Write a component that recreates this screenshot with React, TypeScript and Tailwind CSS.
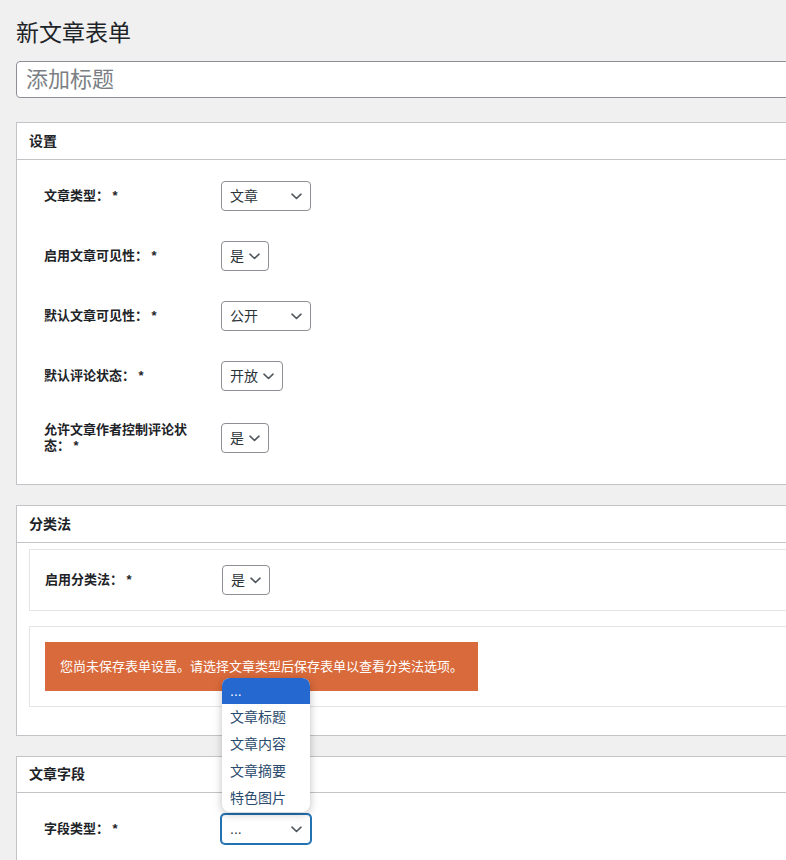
import React from "react";

const font = { fontFamily: '"Liberation Sans", "Noto Sans CJK SC", sans-serif' };

function Chevron() {
  return (
    <svg width="11" height="7" viewBox="0 0 11 7" fill="none" className="shrink-0">
      <path d="M1 1.2 5.5 5.5 10 1.2" stroke="#50575e" strokeWidth="1.6" strokeLinecap="round" strokeLinejoin="round" />
    </svg>
  );
}

function FakeSelect({ value, width, focused }: { value: string; width: string; focused?: boolean }) {
  return (
    <div
      className={`${width} h-[30px] flex items-center justify-between bg-white rounded-[4px] pl-[8px] pr-[8px] text-[14px] text-[#2c3338] border ${
        focused ? "border-[#2271b1] shadow-[0_0_0_1px_#2271b1]" : "border-[#8c8f94]"
      }`}
    >
      <span>{value}</span>
      <Chevron />
    </div>
  );
}

function Row({ label, value, width, tall }: { label: string; value: string; width: string; tall?: boolean }) {
  return (
    <div className={`flex items-center ${tall ? "h-[64px]" : "h-[60px]"}`}>
      <div className="w-[150px] text-[13px] leading-4 font-semibold text-[#1d2327]">{label}</div>
      <div className="ml-[27px]">
        <FakeSelect value={value} width={width} />
      </div>
    </div>
  );
}

function Card({ title, short, children }: { title: string; short?: boolean; children: React.ReactNode }) {
  return (
    <div className="bg-white border border-[#c3c4c7]">
      <div
        className={`${short ? "h-[36px]" : "h-[37px]"} flex items-center pl-[12px] border-b border-[#c3c4c7] text-[14px] font-semibold text-[#1d2327]`}
      >
        {title}
      </div>
      {children}
    </div>
  );
}

export default function App() {
  const options = ["文章标题", "文章内容", "文章摘要", "特色图片"];
  return (
    <div className="min-h-[860px] w-full overflow-hidden bg-[#f0f0f1]" style={font}>
      <div className="w-[1000px] pl-[16px] pt-[18px]">
        <h1 className="text-[23px] leading-[30px] font-normal text-[#1d2327]">新文章表单</h1>

        <div className="mt-[13px] h-[37px] bg-white border border-[#8c8f94] rounded-[4px] flex items-center pl-[9px] text-[22px] text-[#7b7f85]">
          添加标题
        </div>

        <div className="mt-[24px]">
          <Card title="设置">
            <div className="pl-[27px] pt-[6px] pb-[14px]">
              <Row label="文章类型： *" value="文章" width="w-[90px]" />
              <Row label="启用文章可见性： *" value="是" width="w-[48px]" />
              <Row label="默认文章可见性： *" value="公开" width="w-[90px]" />
              <Row label="默认评论状态： *" value="开放" width="w-[62px]" />
              <Row label="允许文章作者控制评论状态： *" value="是" width="w-[48px]" tall />
            </div>
          </Card>
        </div>

        <div className="mt-[20px]">
          <Card title="分类法">
            <div className="pl-[12px] pt-[6px] pb-[28px]">
              <div className="border border-[#e2e4e7] h-[62px] flex items-center pl-[15px]">
                <div className="w-[150px] text-[13px] leading-4 font-semibold text-[#1d2327]">启用分类法： *</div>
                <div className="ml-[27px]">
                  <FakeSelect value="是" width="w-[48px]" />
                </div>
              </div>
              <div className="mt-[15px] border border-[#e2e4e7] pl-[15px] py-[15px]">
                <div className="w-[433px] h-[49px] bg-[#d96a3b] flex items-center pl-[15px] text-[13px] text-white">
                  您尚未保存表单设置。请选择文章类型后保存表单以查看分类法选项。
                </div>
              </div>
            </div>
          </Card>
        </div>

        <div className="mt-[20px]">
          <Card title="文章字段" short>
            <div className="pl-[27px] pt-[6px] pb-[14px]">
              <div className="flex items-center h-[60px]">
                <div className="w-[150px] text-[13px] leading-4 font-semibold text-[#1d2327]">字段类型： *</div>
                <div className="ml-[27px] relative">
                  <FakeSelect value="..." width="w-[90px]" focused />
                  <div className="absolute left-[1px] bottom-[32px] w-[88px] bg-white rounded-[8px] overflow-hidden shadow-[0_2px_8px_rgba(0,0,0,0.25)] z-10">
                    <div className="h-[26px] bg-[#2568d0] text-white text-[14px] flex items-center pl-[8px]">...</div>
                    {options.map((o) => (
                      <div key={o} className="h-[27px] flex items-center pl-[8px] text-[14px] text-[#2a4b6d]">
                        {o}
                      </div>
                    ))}
                  </div>
                </div>
              </div>
            </div>
          </Card>
        </div>
      </div>
    </div>
  );
}
